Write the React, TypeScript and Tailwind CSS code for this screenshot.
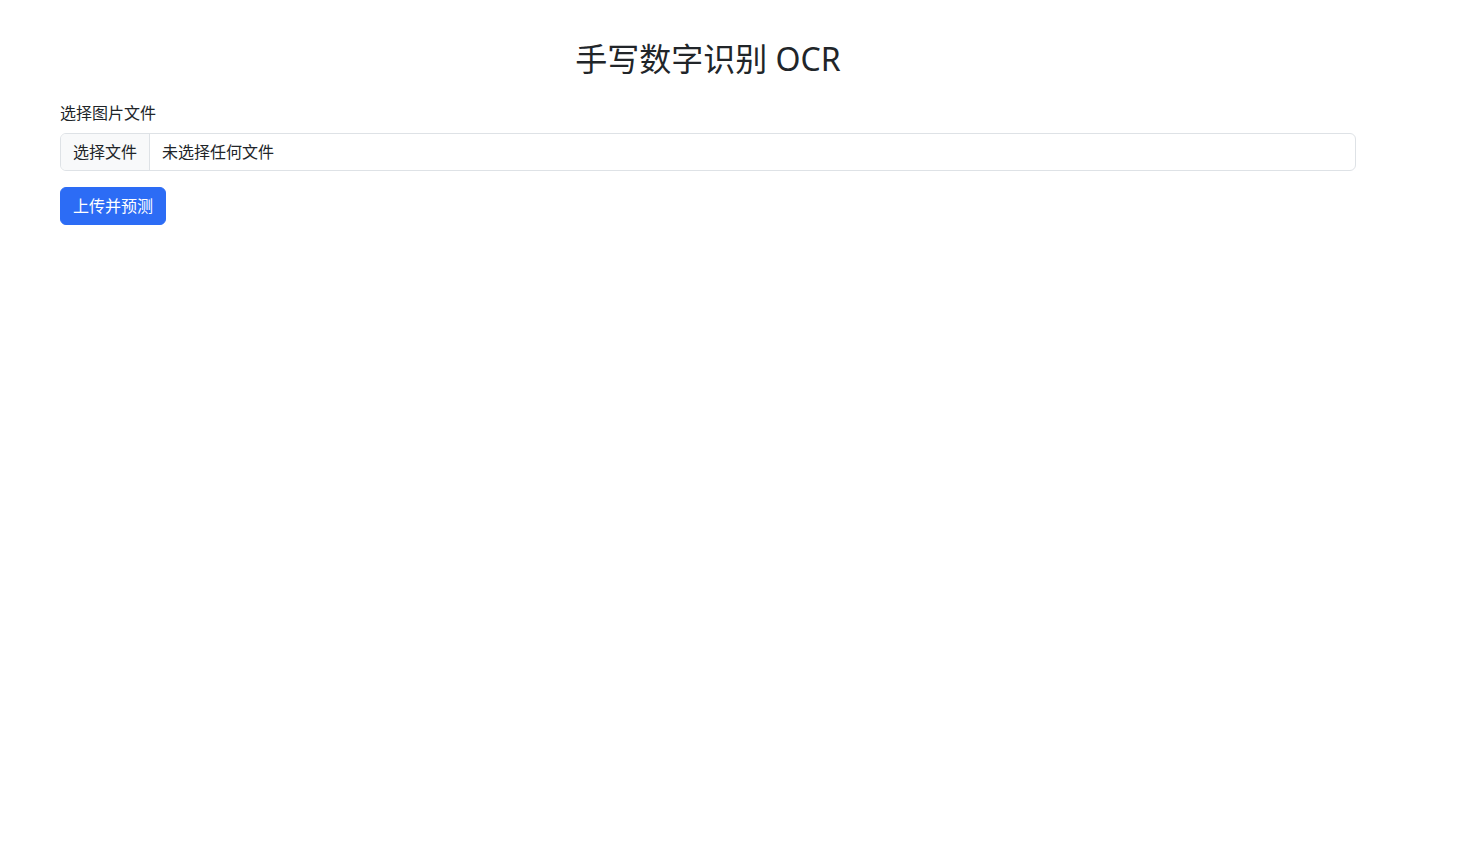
export default function App() {
  const font = { fontFamily: '"Noto Sans", "Noto Sans CJK SC", sans-serif' };
  return (
    <div className="min-h-screen bg-white text-[#212529]" style={font}>
      <div className="ml-[60px] w-[1296px] pt-[40px]">
        <h2 className="text-center text-[32px] leading-[1.2] font-normal mb-[23px]">手写数字识别 OCR</h2>
        <div className="text-[16px] leading-[24px] mb-[8px]">选择图片文件</div>
        <div className="flex h-[38px] w-full items-stretch rounded-[6px] border border-[#dee2e6] overflow-hidden text-[16px] mb-[16px]">
          <div className="flex items-center bg-[#f8f9fa] px-[12px] border-r border-[#dee2e6]">选择文件</div>
          <div className="flex items-center px-[12px]">未选择任何文件</div>
        </div>
        <button className="h-[38px] px-[12px] rounded-[6px] bg-[#2c6cf5] border border-[#2c6cf5] text-white text-[16px] leading-[24px]">上传并预测</button>
      </div>
    </div>
  );
}
